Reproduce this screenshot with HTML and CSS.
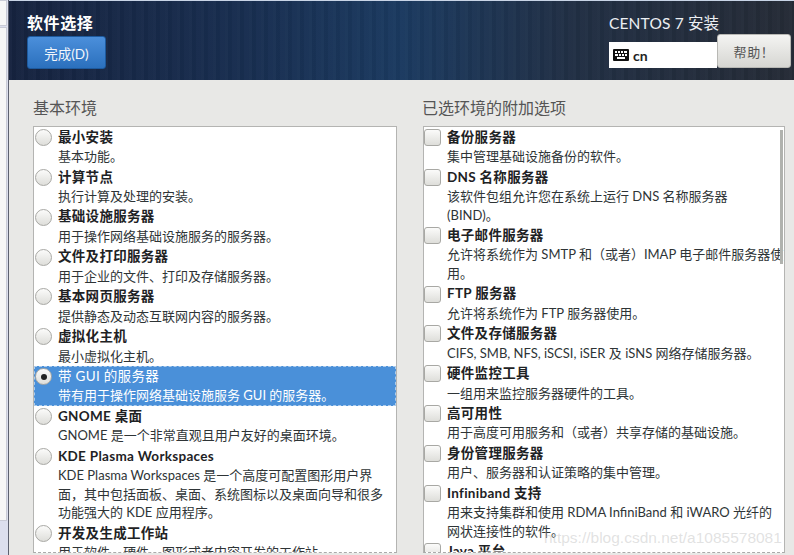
FILE: index.html
```html
<!DOCTYPE html>
<html lang="zh-CN">
<head>
<meta charset="utf-8">
<title>软件选择</title>
<link rel="stylesheet" href="styles.css">
</head>
<body>
<div class="app">
  <div class="gutter"><div class="gutter-box top"></div><div class="gutter-box low"></div></div>
  <div class="main">
    <header class="header">
      <div class="head-left">
        <h1 class="title">软件选择</h1>
        <button class="done">完成(D)</button>
      </div>
      <div class="head-right">
        <div class="product">CENTOS 7 安装</div>
        <div class="head-controls">
          <div class="layout">
            <svg class="kbd" width="16" height="12" viewBox="0 0 16 12"><rect width="16" height="12" rx="1" fill="#111"/><g fill="#fff"><rect x="2" y="2" width="2" height="2"/><rect x="5" y="2" width="2" height="2"/><rect x="8" y="2" width="2" height="2"/><rect x="11" y="2" width="3" height="2"/><rect x="2" y="5" width="3" height="2"/><rect x="6" y="5" width="2" height="2"/><rect x="9" y="5" width="2" height="2"/><rect x="12" y="5" width="2" height="2"/><rect x="4" y="8" width="8" height="2"/></g></svg>
            <span>cn</span>
          </div>
          <button class="help">帮助！</button>
        </div>
      </div>
    </header>
    <div class="content">
      <section class="col">
        <h2 class="heading">基本环境</h2>
        <div class="list envs">
          <div class="row"><span class="radio"></span><div class="txt"><div class="t">最小安装</div><div class="d">基本功能。</div></div></div>
          <div class="row"><span class="radio"></span><div class="txt"><div class="t">计算节点</div><div class="d">执行计算及处理的安装。</div></div></div>
          <div class="row"><span class="radio"></span><div class="txt"><div class="t">基础设施服务器</div><div class="d">用于操作网络基础设施服务的服务器。</div></div></div>
          <div class="row"><span class="radio"></span><div class="txt"><div class="t">文件及打印服务器</div><div class="d">用于企业的文件、打印及存储服务器。</div></div></div>
          <div class="row"><span class="radio"></span><div class="txt"><div class="t">基本网页服务器</div><div class="d">提供静态及动态互联网内容的服务器。</div></div></div>
          <div class="row"><span class="radio"></span><div class="txt"><div class="t">虚拟化主机</div><div class="d">最小虚拟化主机。</div></div></div>
          <div class="row selected"><span class="radio on"></span><div class="txt"><div class="t">带 GUI 的服务器</div><div class="d">带有用于操作网络基础设施服务 GUI 的服务器。</div></div></div>
          <div class="row"><span class="radio"></span><div class="txt"><div class="t">GNOME 桌面</div><div class="d">GNOME 是一个非常直观且用户友好的桌面环境。</div></div></div>
          <div class="row"><span class="radio"></span><div class="txt"><div class="t">KDE Plasma Workspaces</div><div class="d">KDE Plasma Workspaces 是一个高度可配置图形用户界面，其中包括面板、桌面、系统图标以及桌面向导和很多功能强大的 KDE 应用程序。</div></div></div>
          <div class="row"><span class="radio"></span><div class="txt"><div class="t">开发及生成工作站</div><div class="d">用于软件、硬件、图形或者内容开发的工作站。</div></div></div>
        </div>
      </section>
      <section class="col">
        <h2 class="heading heading-right">已选环境的附加选项</h2>
        <div class="list addons">
          <div class="bar"></div>
          <div class="row"><span class="check"></span><div class="txt"><div class="t">备份服务器</div><div class="d">集中管理基础设施备份的软件。</div></div></div>
          <div class="row"><span class="check"></span><div class="txt"><div class="t">DNS 名称服务器</div><div class="d">该软件包组允许您在系统上运行 DNS 名称服务器<br>(BIND)。</div></div></div>
          <div class="row"><span class="check"></span><div class="txt"><div class="t">电子邮件服务器</div><div class="d">允许将系统作为 SMTP 和（或者）IMAP 电子邮件服务器使用。</div></div></div>
          <div class="row"><span class="check"></span><div class="txt"><div class="t">FTP 服务器</div><div class="d">允许将系统作为 FTP 服务器使用。</div></div></div>
          <div class="row"><span class="check"></span><div class="txt"><div class="t">文件及存储服务器</div><div class="d">CIFS, SMB, NFS, iSCSI, iSER 及 iSNS 网络存储服务器。</div></div></div>
          <div class="row"><span class="check"></span><div class="txt"><div class="t">硬件监控工具</div><div class="d">一组用来监控服务器硬件的工具。</div></div></div>
          <div class="row"><span class="check"></span><div class="txt"><div class="t">高可用性</div><div class="d">用于高度可用服务和（或者）共享存储的基础设施。</div></div></div>
          <div class="row"><span class="check"></span><div class="txt"><div class="t">身份管理服务器</div><div class="d">用户、服务器和认证策略的集中管理。</div></div></div>
          <div class="row"><span class="check"></span><div class="txt"><div class="t">Infiniband 支持</div><div class="d">用来支持集群和使用 RDMA InfiniBand 和 iWARO 光纤的<br>网状连接性的软件。</div></div></div>
          <div class="row"><span class="check"></span><div class="txt"><div class="t">Java 平台</div><div class="d">CentOS Linux 的 Java 支持。</div></div></div>
        </div>
        <div class="watermark">https://blog.csdn.net/a1085578081</div>
      </section>
    </div>
  </div>
</div>
</body>
</html>
```
FILE: styles.css
```css
* { box-sizing: border-box; }
html, body { margin: 0; height: 100%; overflow: hidden; }
body {
  font-family: "Lato", "Noto Sans CJK SC", sans-serif;
  background: #e8e8e6;
}
.app { display: flex; height: 555px; width: 794px; }
.gutter {
  width: 9px;
  flex: none;
  background: #dcdfee;
  border-right: 1px solid #5d6170;
  display: flex;
  flex-direction: column;
  gap: 1px;
}
.gutter-box { width: 7px; background: #f7f7f7; border: 1px solid #c9cbd6; border-left: 0; }
.gutter-box.top { height: 26px; }
.gutter-box.low { flex: 1; margin-bottom: 34px; }
.main { flex: 1; display: flex; flex-direction: column; min-width: 0; border-top: 1px solid #c8d4e6; }
.header {
  height: 79px;
  flex: none;
  display: flex;
  justify-content: space-between;
  color: #fff;
  background:
    repeating-linear-gradient(90deg, rgba(255,255,255,.018) 0 3px, rgba(0,0,0,.03) 3px 7px, rgba(255,255,255,.012) 7px 12px),
    linear-gradient(90deg, #16233f 0%, #182e50 30%, #1b3a60 50%, #212f44 72%, #252b36 100%);
}
.head-left { padding: 12px 0 0 18px; }
.title { margin: 0 0 3px; font-size: 16px; line-height: 20px; font-weight: 700; letter-spacing: .6px; }
.done {
  display: block;
  width: 79px;
  height: 33px;
  padding: 0;
  border: 1px solid #1d5a9e;
  border-radius: 3px;
  background: linear-gradient(#4b8fdb, #2b70bd);
  color: #f2f6fb;
  font: 13.5px "Lato", "Noto Sans CJK SC", sans-serif;
}
.head-right { width: 185px; padding: 13px 3px 0 0; }
.product { font-size: 15.5px; line-height: 18px; color: #eceff3; letter-spacing: .15px; }
.head-controls { display: flex; height: 34px; margin-top: 2px; }
.layout {
  width: 108px;
  height: 26px;
  margin-top: 8px;
  background: #fff;
  color: #222;
  display: flex;
  align-items: center;
  gap: 4px;
  padding-left: 4px;
  font-size: 14px;
  font-weight: 700;
}
.help {
  flex: 1;
  padding: 0;
  border: 1px solid #b8b8b4;
  border-radius: 3px;
  background: linear-gradient(#f4f4f2, #d6d6d2);
  color: #555;
  font: 13px "Lato", "Noto Sans CJK SC", sans-serif;
  letter-spacing: .6px;
}
.content {
  flex: 1;
  min-height: 0;
  display: grid;
  grid-template-columns: 364px 362px;
  column-gap: 26px;
  padding: 18px 9px 2px 24px;
}
.col { position: relative; display: flex; flex-direction: column; min-height: 0; }
.heading { margin: 0 0 8px; font-size: 16px; line-height: 20px; font-weight: 400; color: #555; }
.heading-right { margin-left: -1px; }
.list {
  position: relative;
  flex: 1;
  min-height: 0;
  overflow: hidden;
  background: #fff;
  border: 1px solid #b4b4b2;
  border-bottom: 1px dashed #aaa;
}
.row { display: flex; color: #2e3436; padding: .7px 0 1.2px; }
.txt { flex: 1; min-width: 0; padding-left: 6px; }
.envs .txt { padding-right: 9px; }
.t { font-size: 13.5px; line-height: 19.5px; font-weight: 700; letter-spacing: .3px; color: #1e2224; }
.d { font-size: 13px; line-height: 18.5px; }
.selected {
  background: #4a90d9;
  outline: 1px dashed rgba(255,255,255,.55);
  outline-offset: -1px;
}
.selected .t, .selected .d { color: #fff; }
.selected .t { font-weight: 400; }
.radio, .check {
  flex: none;
  width: 17px;
  height: 17px;
  margin: 1.3px 0 0 1px;
  background: linear-gradient(#fbfbfa, #dededa);
  border: 1px solid #a8a8a4;
  display: flex;
  align-items: center;
  justify-content: center;
}
.radio { border-radius: 50%; }
.radio.on::after { content: ""; width: 6px; height: 6px; border-radius: 50%; background: #222; }
.check { border-radius: 3px; margin-left: 0; }
.bar {
  position: absolute;
  right: 1px;
  top: 3px;
  width: 3px;
  height: 134px;
  background: #b0b2ae;
}
.watermark {
  position: absolute;
  left: 121px;
  top: 431px;
  font: 15.5px "Liberation Sans", sans-serif;
  color: rgba(190,190,190,.45);
  white-space: nowrap;
}
```
